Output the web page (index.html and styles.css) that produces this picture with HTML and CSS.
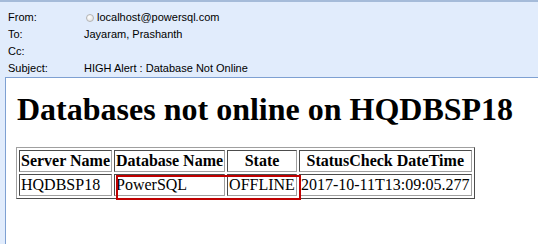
FILE: index.html
```html
<!DOCTYPE html>
<html lang="en">
<head>
    <meta charset="utf-8">
    <title>HIGH Alert : Database Not Online</title>
    <link rel="stylesheet" href="styles.css">
</head>
<body>
    <div id="header">
        <div class="field">
            <span class="label">From:</span>
            <span class="value"><span class="sender-dot"></span>localhost@powersql.com</span>
        </div>
        <div class="field">
            <span class="label">To:</span>
            <span class="value">Jayaram, Prashanth</span>
        </div>
        <div class="field">
            <span class="label">Cc:</span>
            <span class="value"></span>
        </div>
        <div class="field">
            <span class="label">Subject:</span>
            <span class="value">HIGH Alert : Database Not Online</span>
        </div>
    </div>
    <div id="message">
        <h1>Databases not online on HQDBSP18</h1>
        <div class="table-wrap">
            <table border="1">
                <tr>
                    <th>Server Name</th>
                    <th>Database Name</th>
                    <th>State</th>
                    <th>StatusCheck DateTime</th>
                </tr>
                <tr>
                    <td>HQDBSP18</td>
                    <td>PowerSQL</td>
                    <td>OFFLINE</td>
                    <td>2017-10-11T13:09:05.277</td>
                </tr>
            </table>
            <!-- annotation drawn over the offline row -->
            <div class="highlight"></div>
        </div>
    </div>
</body>
</html>
```

FILE: styles.css
```css
body {
    margin: 0;
    padding: 0;
    background-color: #e1ecfc;
    height: 100vh;
    overflow: hidden;
    display: flex;
    flex-direction: column;
}

#header {
    border-top: 2px solid #a5bbd9;
    padding: 7px 0 0 8px;
    font-family: 'Liberation Sans', Arial, sans-serif;
    font-size: 11px;
    color: #000;
}

.field {
    display: flex;
    height: 17px;
    line-height: 17px;
}

.label {
    width: 76px;
}

.value {
    display: flex;
    align-items: center;
}

.sender-dot {
    width: 8px;
    height: 8px;
    margin: 0 3px 0 2px;
    border-radius: 50%;
    border: 1px solid #b4b4b4;
    background: radial-gradient(circle at 35% 35%, #ffffff, #dcdcdc);
    box-sizing: border-box;
}

#message {
    flex: 1;
    margin-left: 5px;
    background-color: #fff;
    border-top: 1px solid #7ea0d2;
    border-left: 1px solid #7ea0d2;
    padding: 0 0 0 10px;
    font-family: 'Liberation Serif', 'Times New Roman', serif;
    color: #000;
}

h1 {
    font-size: 32px;
    margin: 13px 0 19px 1px;
}

.table-wrap {
    position: relative;
    display: inline-block;
}

table {
    font-size: 16px;
    border-color: #a0a0a0;
}

th, td {
    border-color: #a0a0a0;
    padding: 1px;
}

.highlight {
    position: absolute;
    left: 100px;
    top: 28px;
    width: 185px;
    height: 25px;
    border: 2px solid #c00000;
    box-sizing: border-box;
}
```
